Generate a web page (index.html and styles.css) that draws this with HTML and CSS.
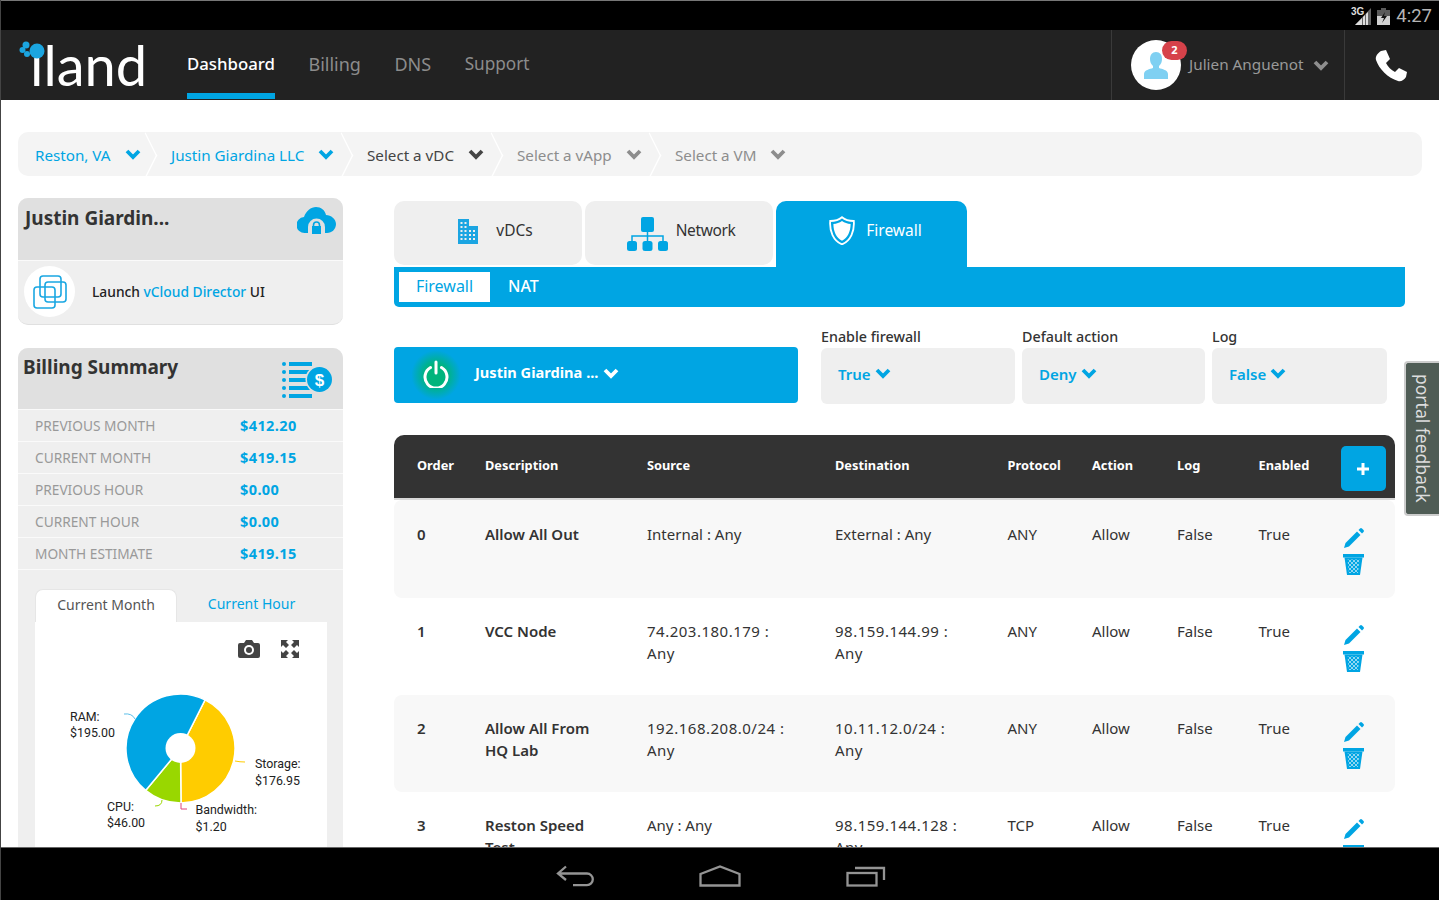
FILE: index.html
```html
<!DOCTYPE html>
<html lang="en">
<head>
<meta charset="utf-8">
<title>iland Dashboard</title>
<link rel="stylesheet" href="styles.css">
</head>
<body>
<svg class="defs" width="0" height="0" aria-hidden="true">
  <defs>
    <symbol id="chev" viewBox="0 0 16 11"><path d="M2 2l6 6 6-6" fill="none" stroke="currentColor" stroke-width="3.800"/></symbol>
    <symbol id="pencil" viewBox="0 0 21 21"><path d="M14 3.500l3.500 3.500L6 18.500 1 20l1.500-5z" fill="#00a5e3"/><path d="M15.500 2l1.500-1.500a1.500 1.500 0 0 1 2 0l1.500 1.500a1.500 1.500 0 0 1 0 2L19 5.500z" fill="#00a5e3"/></symbol>
    <pattern id="mesh" width="4" height="4" patternUnits="userSpaceOnUse"><rect width="4" height="4" fill="#00a5e3"/><circle cx="1" cy="1" r="1" fill="#bfe8f8"/><circle cx="3" cy="3" r="1" fill="#bfe8f8"/></pattern>
    <symbol id="trash" viewBox="0 0 21 21"><path d="M0 0h21v3.500H0z" fill="#00a5e3"/><path d="M1.500 3.500h18L17 21H4z" fill="#00a5e3"/><path d="M4.500 5.500h12L15 19H6z" fill="url(#mesh)"/></symbol>
  </defs>
</svg>
<div class="screen">
  <div class="status">
    <span class="net">3G</span>
    <svg class="sig" width="16" height="17" viewBox="0 0 16 17"><path d="M16 0v17H0z" fill="#666"/><path d="M16 17H8V9l2-2v10h1V6l2-2v13h1zM7 17H0l7-7z" fill="#ddd"/></svg>
    <svg class="bat" width="13" height="17" viewBox="0 0 13 17"><path d="M4 0h5v2h4v15H0V2h4z" fill="#5a5a5a"/><path d="M0 8h13v9H0z" fill="#d0d0d0"/><path d="M8 4L4 10h3l-2 5 5-7H7z" fill="#111"/></svg>
    <span class="clock">4:27</span>
  </div>

  <header class="top">
    <div class="logo">
      <span class="logotext">iland</span>
      <svg class="dots" width="28" height="26" viewBox="0 0 28 26"><circle cx="19" cy="11" r="7.500" fill="#1ba5e0"/><circle cx="8" cy="5" r="3.500" fill="#1ba5e0"/><circle cx="4.500" cy="10" r="3" fill="#1ba5e0"/><circle cx="9" cy="14" r="3" fill="#1ba5e0"/></svg>
    </div>
    <nav class="mainnav">
      <a class="nav active">Dashboard</a>
      <a class="nav">Billing</a>
      <a class="nav">DNS</a>
      <a class="nav sup">Support</a>
    </nav>
    <div class="user">
      <div class="avatar">
        <svg width="24" height="27" viewBox="0 0 24 27"><path d="M12 0c4 0 6 3 6 7 0 3-1 5-3 7v2c3 1 9 2 9 6v5H0v-5c0-4 6-5 9-6v-2C7 12 6 10 6 7c0-4 2-7 6-7z" fill="#7fd0f2"/></svg>
        <span class="badge">2</span>
      </div>
      <span class="uname">Julien Anguenot</span>
      <svg class="chev grey2" width="16" height="11"><use href="#chev"/></svg>
    </div>
    <div class="phone">
      <svg width="32" height="32" viewBox="0 0 32 32"><path d="M6 1l5-1 4 9-4 4c2 4 5 7 9 9l4-4 8 4-1 5c-2 3-5 5-8 4C13 28 4 19 1 10 0 6 3 3 6 1z" fill="#fff"/></svg>
    </div>
  </header>

  <main class="content">
    <div class="crumbs">
      <div class="crumb c1 blue"><span>Reston, VA</span><svg width="16" height="11"><use href="#chev"/></svg></div>
      <div class="crumb c2 blue"><span>Justin Giardina LLC</span><svg width="16" height="11"><use href="#chev"/></svg></div>
      <div class="crumb c3 dark"><span>Select a vDC</span><svg width="16" height="11"><use href="#chev"/></svg></div>
      <div class="crumb c4 grey"><span>Select a vApp</span><svg width="16" height="11"><use href="#chev"/></svg></div>
      <div class="crumb c5 grey"><span>Select a VM</span><svg width="16" height="11"><use href="#chev"/></svg></div>
    </div>

    <div class="columns">
      <aside class="side">
        <section class="card">
          <div class="cardhead h1">
            <h2 class="title">Justin Giardin...</h2>
            <svg class="cloud" width="40" height="28" viewBox="0 0 40 28"><path d="M8 26a8 8 0 0 1-1-16C9 4 14 0 19 0c5 0 9 3 10 8 5 0 10 4 10 9s-4 9-9 9z" fill="#00a5e3"/><path d="M11 28v-8a8.500 8.500 0 0 1 17 0v8z" fill="#e0e0e0"/><path d="M15 19h9v8h-9z" fill="#00a5e3"/><path d="M16.500 19v-1a3 3 0 0 1 6 0v1" fill="none" stroke="#00a5e3" stroke-width="1.600"/></svg>
          </div>
          <div class="launch">
            <div class="vcd">
              <svg width="34" height="34" viewBox="0 0 34 34" fill="none" stroke="#1aa7e2" stroke-width="1.600"><rect x="1" y="12" width="21" height="21" rx="3"/><rect x="7" y="1" width="21" height="21" rx="3"/><rect x="12" y="7" width="21" height="20" rx="3"/></svg>
            </div>
            <p class="ltext">Launch <span class="bl">vCloud Director</span> UI</p>
          </div>
        </section>

        <section class="card bill">
          <div class="cardhead h2">
            <h2 class="title">Billing Summary</h2>
            <svg class="billico" width="50" height="36" viewBox="0 0 50 36"><g fill="#00a5e3"><circle cx="2" cy="2" r="2"/><rect x="7" y="0" width="23" height="4"/><circle cx="2" cy="10" r="2"/><rect x="7" y="8" width="23" height="4"/><circle cx="2" cy="18" r="2"/><rect x="7" y="16" width="21" height="4"/><circle cx="2" cy="26" r="2"/><rect x="7" y="24" width="21" height="4"/><circle cx="2" cy="34" r="2"/><rect x="7" y="32" width="23" height="4"/><circle cx="37.500" cy="17.500" r="14" fill="#e0e0e0"/><circle cx="37.500" cy="17.500" r="12.500"/></g><text x="37.500" y="23.500" class="dollar" text-anchor="middle">$</text></svg>
          </div>
          <div class="brow"><span>PREVIOUS MONTH</span><b>$412.20</b></div>
          <div class="brow"><span>CURRENT MONTH</span><b>$419.15</b></div>
          <div class="brow"><span>PREVIOUS HOUR</span><b>$0.00</b></div>
          <div class="brow"><span>CURRENT HOUR</span><b>$0.00</b></div>
          <div class="brow"><span>MONTH ESTIMATE</span><b>$419.15</b></div>
          <div class="chartwrap">
            <div class="ctabs">
              <span class="ctab on">Current Month</span>
              <span class="ctab">Current Hour</span>
            </div>
            <div class="chart">
              <div class="ctools">
                <svg width="22" height="18" viewBox="0 0 22 18"><path d="M2 3h4l2-3h6l2 3h4a2 2 0 0 1 2 2v11a2 2 0 0 1-2 2H2a2 2 0 0 1-2-2V5a2 2 0 0 1 2-2z" fill="#444"/><circle cx="11" cy="10" r="5" fill="#fff"/><circle cx="11" cy="10" r="3" fill="#444"/></svg>
                <svg width="20" height="20" viewBox="0 0 20 20" fill="#444"><path d="M1 1h7L6 3l3 3-3 3-3-3-2 2zM19 1v7l-2-2-3 3-3-3 3-3-2-2zM1 19v-7l2 2 3-3 3 3-3 3 2 2zM19 19h-7l2-2-3-3 3-3 3 3 2-2z"/></svg>
              </div>
              <svg class="pie" width="292" height="200" viewBox="0 0 292 200">
                <g stroke="#fff" stroke-width="1.500">
                  <path d="M145.500 106.500L170.070 57.850A54.500 54.500 0 0 1 146 161z" fill="#ffcc00"/>
                  <path d="M145.500 106.500L146 161A54.500 54.500 0 0 1 110.660 148.410z" fill="#99d700"/>
                  <path d="M145.500 106.500L110.660 148.410A54.500 54.500 0 0 1 170.070 57.850z" fill="#00a5e3"/>
                </g>
                <circle cx="145.500" cy="106" r="15" fill="#fff"/>
                <path d="M89 72q8-1 11 5" fill="none" stroke="#5cbfea"/>
                <path d="M200 119q5 1 10 1" fill="none" stroke="#ffcc00"/>
                <path d="M120 164q7 0 7-6" fill="none" stroke="#99d700"/>
                <path d="M146 161v6h6" fill="none" stroke="#e0427d"/>
                <text class="plab" x="35" y="79">RAM:</text><text class="plab" x="35" y="95">$195.00</text>
                <text class="plab" x="220" y="126">Storage:</text><text class="plab" x="220" y="143">$176.95</text>
                <text class="plab" x="72" y="169">CPU:</text><text class="plab" x="72" y="185">$46.00</text>
                <text class="plab" x="160.500" y="172">Bandwidth:</text><text class="plab" x="160.500" y="189">$1.20</text>
              </svg>
            </div>
          </div>
        </section>
      </aside>

      <div class="panel">
        <div class="tabs">
          <div class="tab t1">
            <svg width="22" height="26" viewBox="0 0 22 26" fill="#1ba5e2"><path d="M1 1h11v7h9v18H1z"/><g fill="#eee"><rect x="3.500" y="4" width="2" height="2"/><rect x="7.500" y="4" width="2" height="2"/><rect x="3.500" y="8" width="2" height="2"/><rect x="7.500" y="8" width="2" height="2"/><rect x="3.500" y="12" width="2" height="2"/><rect x="7.500" y="12" width="2" height="2"/><rect x="12" y="12" width="2" height="2"/><rect x="16" y="12" width="2" height="2"/><rect x="3.500" y="16" width="2" height="2"/><rect x="7.500" y="16" width="2" height="2"/><rect x="12" y="16" width="2" height="2"/><rect x="16" y="16" width="2" height="2"/><rect x="3.500" y="20" width="2" height="2"/><rect x="7.500" y="20" width="2" height="2"/><rect x="12" y="20" width="2" height="2"/><rect x="16" y="20" width="2" height="2"/></g></svg>
            <span>vDCs</span>
          </div>
          <div class="tab t2">
            <svg class="neticon" width="42" height="34" viewBox="0 0 42 34"><g fill="#00a5e3"><rect x="14" y="0" width="13" height="15" rx="2"/><rect x="0" y="24" width="10" height="10" rx="2.500"/><rect x="15.500" y="24" width="10" height="10" rx="2.500"/><rect x="31" y="24" width="10" height="10" rx="2.500"/></g><path d="M20.500 14v10M5 24v-5h31v5" fill="none" stroke="#00a5e3" stroke-width="1.500"/></svg>
            <span>Network</span>
          </div>
          <div class="tab t3">
            <svg width="26" height="29" viewBox="0 0 26 29"><path d="M13 1.200c3 2.600 7 3.800 11.800 3.800.8 10-3 19.600-11.800 23.400C4.200 24.600.4 15 1.200 5 6 5 10 3.800 13 1.200z" fill="none" stroke="#fff" stroke-width="1.800"/><path d="M13 5c2.600 1.800 5.400 2.700 8.600 3 0 7.500-3 14-8.600 16.800C7.400 22 4.400 15.500 4.400 8c3.200-.3 6-1.200 8.600-3z" fill="#fff"/></svg>
            <span>Firewall</span>
          </div>
        </div>
        <div class="subbar">
          <span class="sub on">Firewall</span>
          <span class="sub">NAT</span>
        </div>

        <div class="controls">
          <div class="power">
            <span class="glow">
              <svg width="26" height="28" viewBox="0 0 26 28" fill="none" stroke="#fff" stroke-width="3" stroke-linecap="round"><path d="M7.500 7.500a11 11 0 1 0 11 0"/><path d="M13 2v11"/></svg>
            </span>
            <strong>Justin Giardina ...</strong>
            <svg width="16" height="11"><use href="#chev"/></svg>
          </div>
          <div class="field f1"><label>Enable firewall</label><div class="sel">True<svg width="16" height="11"><use href="#chev"/></svg></div></div>
          <div class="field f2"><label>Default action</label><div class="sel">Deny<svg width="16" height="11"><use href="#chev"/></svg></div></div>
          <div class="field f3"><label>Log</label><div class="sel">False<svg width="16" height="11"><use href="#chev"/></svg></div></div>
        </div>

        <div class="table">
          <div class="row thead">
            <span>Order</span><span>Description</span><span>Source</span><span>Destination</span><span>Protocol</span><span>Action</span><span>Log</span><span>Enabled</span>
            <span class="addbtn"><svg width="14" height="14" viewBox="0 0 14 14"><path d="M7 1v12M1 7h12" stroke="#fff" stroke-width="3"/></svg></span>
          </div>
          <div class="row rule odd first">
            <b>0</b><b>Allow All Out</b><span>Internal : Any</span><span>External : Any</span><span>ANY</span><span>Allow</span><span>False</span><span>True</span>
            <span class="acts"><svg width="21" height="21"><use href="#pencil"/></svg><svg width="21" height="21"><use href="#trash"/></svg></span>
          </div>
          <div class="row rule">
            <b>1</b><b>VCC Node</b><span class="ip">74.203.180.179 : Any</span><span class="ip">98.159.144.99 : Any</span><span>ANY</span><span>Allow</span><span>False</span><span>True</span>
            <span class="acts"><svg width="21" height="21"><use href="#pencil"/></svg><svg width="21" height="21"><use href="#trash"/></svg></span>
          </div>
          <div class="row rule odd">
            <b>2</b><b>Allow All From HQ Lab</b><span class="ip">192.168.208.0/24 : Any</span><span class="ip">10.11.12.0/24 : Any</span><span>ANY</span><span>Allow</span><span>False</span><span>True</span>
            <span class="acts"><svg width="21" height="21"><use href="#pencil"/></svg><svg width="21" height="21"><use href="#trash"/></svg></span>
          </div>
          <div class="row rule">
            <b>3</b><b>Reston Speed Test</b><span>Any : Any</span><span class="ip">98.159.144.128 : Any</span><span>TCP</span><span>Allow</span><span>False</span><span>True</span>
            <span class="acts"><svg width="21" height="21"><use href="#pencil"/></svg><svg width="21" height="21"><use href="#trash"/></svg></span>
          </div>
        </div>
      </div>
    </div>
    <div class="feedback"><span>portal feedback</span></div>
  </main>

  <footer class="navbar">
    <svg class="back" width="38" height="22" viewBox="0 0 38 22" fill="none" stroke="#949494" stroke-width="2.300"><path d="M10 1.500L2 8.500l8 6.500M2 8.500h29a5.800 5.800 0 0 1 0 11.600H17"/></svg>
    <svg width="42" height="22" viewBox="0 0 42 22" fill="none" stroke="#949494" stroke-width="2.300"><path d="M1.500 20.500V9L21 1.500 40.500 9v11.500z"/></svg>
    <svg width="40" height="22" viewBox="0 0 40 22" fill="none" stroke="#949494" stroke-width="2.300"><rect x="1.500" y="8" width="29" height="12.500"/><path d="M9 3h29v12"/></svg>
  </footer>
</div>
</body>
</html>
```
FILE: styles.css
```css
* { box-sizing: border-box; }
html, body { margin: 0; padding: 0; }
body { width: 1439px; height: 900px; overflow: hidden; background: #fff; font-family: "Noto Sans", "DejaVu Sans", sans-serif; color: #333; }
svg { flex: none; }
.defs { position: absolute; }
.screen { width: 1439px; height: 900px; display: flex; flex-direction: column; border-left: 1px solid #444; }
.status { height: 30px; flex: none; background: #000; border-top: 1px solid #777; display: flex; align-items: center; justify-content: flex-end; padding-right: 7px; }
.net { font: bold 10px "Liberation Sans", sans-serif; color: #ddd; margin-right: -9px; margin-top: -9px; position: relative; }
.sig { margin: 2px 6px 0 0; }
.bat { margin-top: 1px; }
.clock { font: 18.500px Roboto, sans-serif; color: #b4b4b4; margin-left: 6px; }
.top { height: 70px; flex: none; background: #222; display: flex; align-items: stretch; }
.logo { width: 186px; position: relative; padding: 5px 0 0 29px; }
.dots { position: absolute; left: 17px; top: 10px; }
.logotext { font: 400 56px/60px Lato, sans-serif; color: #fff; }
.mainnav { display: flex; gap: 33.500px; width: 924px; }
.nav { font-size: 18px; line-height: 68px; height: 69px; color: #8c8c8c; border-bottom: 6px solid transparent; }
.nav.active { color: #fff; border-bottom-color: #00a5e3; font-weight: 500; font-size: 16.800px; }
.nav.sup { font-size: 17.200px; }
.user { width: 234px; height: 70px; border-left: 1px solid #3a3a3a; border-right: 1px solid #3a3a3a; display: flex; align-items: center; padding-left: 19px; position: relative; }
.avatar { width: 50px; height: 50px; flex: none; border-radius: 50%; background: #fff; display: flex; align-items: center; justify-content: center; position: relative; margin-top: -1px; padding-top: 2px; }
.badge { position: absolute; right: -6px; top: 1px; width: 25px; height: 19px; border-radius: 10px; background: #d6424a; color: #fff; font-size: 11px; font-weight: 700; text-align: center; line-height: 18px; }
.uname { font-size: 15.300px; color: #999; margin-left: 8px; margin-top: -3px; }
.chev { margin-left: 9px; }
.grey2 { color: #8e8e8e; }
.phone { flex: 1; display: flex; align-items: center; justify-content: center; padding: 2px 2px 0 0; height: 70px; }
.content { flex: 1; min-height: 0; overflow: hidden; position: relative; padding: 32px 0 0 17px; }
.crumbs { width: 1404px; height: 44px; background: #f4f4f4; border-radius: 10px; display: flex; align-items: center; font-size: 15.200px; white-space: nowrap; overflow: hidden; }
.crumb { height: 44px; flex: none; display: flex; align-items: center; gap: 14px; padding: 1px 0 0 17px; position: relative; }
.crumb::after { content: ""; position: absolute; right: -7.500px; top: 6.500px; width: 31px; height: 31px; transform: scaleX(.5) rotate(45deg); border-top: 2px solid #fff; border-right: 2px solid #fff; }
.c1 { width: 136px; } .c2 { width: 196px; } .c3 { width: 150px; } .c4 { width: 158px; }
.c5::after { display: none; }
.blue { color: #00a5e3; } .dark { color: #444; } .grey { color: #8d8d8d; }
.columns { display: flex; gap: 51px; margin-top: 22px; }
.side { width: 325px; flex: none; }
.card { background: #efefef; border-radius: 10px; overflow: hidden; border-bottom: 1px solid #e0e0e0; }
.bill { margin-top: 23px; border-radius: 10px 10px 0 0; border-bottom: 0; }
.cardhead { background: #e0e0e0; display: flex; justify-content: space-between; border-bottom: 1px solid #fafafa; position: relative; }
.h1 { height: 63px; padding: 7px 6px 0 7px; }
.h2 { height: 62px; padding: 6px 11px 0 5px; }
.title { margin: 0; font-size: 19px; line-height: 26px; font-weight: 700; color: #333; }
.cloud { margin-top: 2px; }
.billico { margin-top: 8px; }
.dollar { font: bold 17px "Liberation Sans", sans-serif; fill: #fff; }
.launch { height: 63px; display: flex; align-items: center; padding-left: 6px; padding-bottom: 2px; }
.vcd { width: 51px; height: 51px; border-radius: 50%; background: #fff; display: flex; align-items: center; justify-content: center; }
.ltext { margin: 0 0 0 17px; font-size: 13.800px; font-weight: 500; color: #222; }
.bl { color: #00a5e3; }
.brow { height: 32px; border-bottom: 1px solid #fafafa; display: flex; align-items: center; padding-left: 17px; font-size: 13.700px; color: #999; }
.brow span { width: 205px; }
.brow b { color: #00a5e3; font-size: 14.500px; letter-spacing: .4px; margin-top: -2px; }
.chartwrap { padding: 19px 17px 0; }
.ctabs { display: flex; height: 33px; font-size: 14px; }
.ctab { width: 143px; text-align: center; line-height: 30px; color: #00a5e3; border-radius: 8px 8px 0 0; }
.ctab + .ctab { width: 150px; }
.ctab.on { background: #fff; color: #555; border: 1px solid #e6e6e6; border-bottom: 0; }
.chart { background: #fff; height: 240px; width: 292px; position: relative; padding-top: 17px; }
.ctools { display: flex; justify-content: flex-end; gap: 20px; padding-right: 27px; align-items: center; height: 20px; }
.pie { position: absolute; left: 0; top: 20px; }
.plab { font: 12.400px Roboto, sans-serif; fill: #222; }
.panel { width: 1011px; flex: none; }
.tabs { display: flex; gap: 3px; height: 69px; padding-top: 3px; }
.tab { width: 188px; height: 64px; background: #efefef; border-radius: 10px; display: flex; align-items: center; justify-content: center; gap: 17px; font-size: 15.500px; color: #333; padding-bottom: 6px; }
.t1 { padding-left: 14px; }
.t1 svg { margin-top: 2px; }
.t2 { gap: 7px; padding-left: 4px; }
.t2 span { letter-spacing: -.4px; }
.neticon { margin-top: 8px; }
.t3 { background: #00a5e3; color: #fff; height: 66px; border-radius: 10px 10px 0 0; width: 191px; gap: 11px; padding-left: 8px; padding-bottom: 8px; }
.subbar { background: #00a5e3; height: 40px; border-radius: 0 0 5px 5px; display: flex; padding: 5px 0 0 5px; font-size: 16px; color: #fff; }
.sub { height: 30px; line-height: 28px; padding: 0 18px; font-weight: 500; }
.sub.on { background: #fff; color: #00a5e3; width: 91px; padding: 0; text-align: center; font-weight: 400; }
.controls { display: flex; margin-top: 20px; width: 994px; align-items: flex-end; }
.power { width: 404px; height: 56px; background: #00a5e3; border-radius: 4px; display: flex; align-items: center; color: #fff; font-size: 15px; margin-right: 23px; margin-bottom: 1px; }
.glow { width: 50px; height: 50px; margin-left: 17px; border-radius: 50%; background: radial-gradient(circle, #00b47c 30%, rgba(0,180,124,0) 70%); display: flex; align-items: center; justify-content: center; }
.power strong { margin-left: 14px; margin-right: 5px; font-weight: 700; font-size: 14.600px; margin-top: -7px; }
.power svg:last-child { margin-top: -3px; }
.field { display: flex; flex-direction: column; }
.field label { font-size: 14.300px; font-weight: 500; color: #333; line-height: 20px; margin-bottom: 1px; }
.sel { height: 56px; background: #efefef; border-radius: 6px; display: flex; align-items: center; gap: 4px; padding: 0 0 5px 17px; color: #00a5e3; font-size: 15px; font-weight: 600; }
.f1 { width: 194px; margin-right: 7px; } .f2 { width: 183px; margin-right: 7px; } .f3 { width: 175px; }
.table { margin-top: 31px; width: 1001px; }
.row { display: grid; grid-template-columns: 68px 162px 188px 172.500px 84.500px 85px 81.500px 82px 1fr; padding-left: 23px; font-size: 15px; color: #333; }
.thead { height: 65px; background: #333; color: #fff; border-radius: 10px 10px 0 0; font-size: 12.800px; font-weight: 700; align-items: center; border-bottom: 2px solid #d8d8d8; }
.thead span { margin-top: -3px; }
.addbtn { width: 45px; height: 45px; background: #00a5e3; border-radius: 5px; display: flex; align-items: center; justify-content: center; margin-top: 4px !important; }
.rule { height: 97px; padding-top: 22px; line-height: 22px; background: #fff; }
.rule.first { height: 98px; padding-top: 23px; }
.rule.odd { background: #f8f8f8; border-radius: 8px; }
.rule b { font-weight: 600; color: #333; }
.rule b:nth-child(2) { padding-right: 43px; }
.rule span { padding-right: 35px; }
.rule span:nth-child(3) { padding-right: 46px; }
.ip { letter-spacing: .5px; }
.acts { display: flex; flex-direction: column; gap: 5px; padding: 5px 0 0 2px !important; align-items: flex-start; }
.feedback { position: absolute; right: 0; top: 261px; width: 35px; height: 155px; background: #4f5c55; border: 2px solid #ccc; border-right: 0; border-radius: 4px 0 0 4px; display: flex; align-items: center; justify-content: center; }
.feedback span { writing-mode: vertical-rl; font-size: 17.500px; color: #ddd; white-space: nowrap; }
.navbar { height: 53px; flex: none; background: #000; display: flex; align-items: center; justify-content: center; gap: 105px; padding-top: 3px; border-top: 1px solid #666; }
.back { margin-left: 2px; }
```
